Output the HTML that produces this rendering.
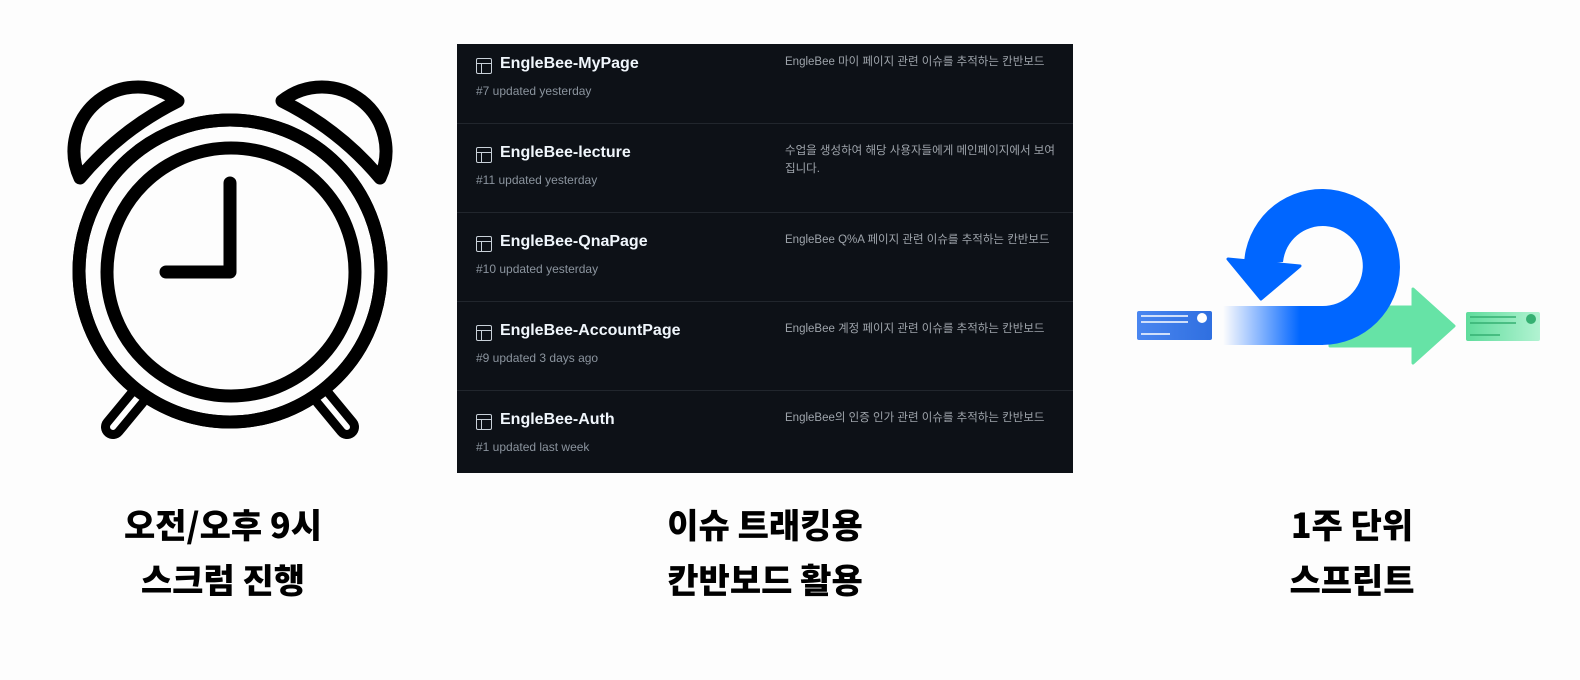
<!DOCTYPE html>
<html><head><meta charset="utf-8"><style>
body{margin:0;width:1580px;height:680px;background:#fdfdfd;position:relative;overflow:hidden;font-family:"Liberation Sans","Noto Sans CJK KR",sans-serif}
.panel{position:absolute;left:457px;top:44px;width:616px;height:429px;background:#0d1117;overflow:hidden}
.row{position:absolute;left:0;width:616px;height:89px;border-bottom:1px solid #21262d}
.ic{position:absolute;left:19px;top:24px;width:14px;height:14px;border:1.5px solid #c9d1d9;border-radius:2px}
.ic:before{content:"";position:absolute;left:0;right:0;top:4px;border-top:1.5px solid #c9d1d9}
.ic:after{content:"";position:absolute;left:4px;top:4px;bottom:0;border-left:1.5px solid #c9d1d9}
.t{position:absolute;left:43px;top:21px;color:#f0f6fc;font-weight:bold;font-size:16px}
.s{position:absolute;left:19px;top:50px;color:#8b949e;font-size:12px}
.d{position:absolute;left:328px;top:19px;color:#9ea4ab;font-size:11.5px;line-height:18px;width:290px}
.cap{position:absolute;text-align:center;font-weight:900;font-size:34px;line-height:55px;color:#000;font-family:"Noto Sans CJK KR","Liberation Sans",sans-serif}
</style></head><body>
<svg width="1580" height="680" style="position:absolute;left:0;top:0">
<g fill="none" stroke="#000" stroke-width="13" stroke-linecap="round" stroke-linejoin="round">
<circle cx="230" cy="271" r="151"/>
<circle cx="231" cy="272" r="124"/>
<path d="M230,183 L230,272 L166,272"/>
<path d="M80,178 A64,64 0 0 1 178,101 Q120,130 80,178 Z"/>
<path d="M380,178 A64,64 0 0 0 282,101 Q340,130 380,178 Z"/>
</g>
<g stroke-linecap="round">
<line x1="137" y1="398" x2="113" y2="427" stroke="#000" stroke-width="24"/>
<line x1="137" y1="398" x2="113" y2="427" stroke="#fff" stroke-width="6"/>
<line x1="323" y1="398" x2="347" y2="427" stroke="#000" stroke-width="24"/>
<line x1="323" y1="398" x2="347" y2="427" stroke="#fff" stroke-width="6"/>
</g>
<circle cx="230" cy="271" r="151" fill="none" stroke="#000" stroke-width="13"/>
<defs>
<linearGradient id="bg" x1="1223" x2="1300" y1="0" y2="0" gradientUnits="userSpaceOnUse"><stop offset="0" stop-color="#0a66ff" stop-opacity="0"/><stop offset="1" stop-color="#0066ff"/></linearGradient>
<linearGradient id="gc" x1="0" x2="1" y1="0" y2="0"><stop offset="0" stop-color="#5fdc9c"/><stop offset="1" stop-color="#b2f3d2"/></linearGradient>
<linearGradient id="bc" x1="0" x2="1"><stop offset="0" stop-color="#4a86f0"/><stop offset="1" stop-color="#2f6fe0"/></linearGradient>
</defs>
<path d="M1330,307 L1413,307 L1413,289 L1454,326 L1413,363 L1413,346 L1330,346 Z" fill="#66e3a6" stroke="#66e3a6" stroke-width="3" stroke-linejoin="round"/>
<rect x="1223" y="306" width="100" height="39" fill="url(#bg)"/>
<path d="M1322,306 A40,40 0 1 0 1283,262 L1244,265 A78,78 0 1 1 1322,345 Z" fill="#0066ff"/>
<path d="M1228,259 L1300,266 L1261,299 Z" fill="#0066ff" stroke="#0066ff" stroke-width="3" stroke-linejoin="round"/>
<rect x="1137" y="311" width="75" height="29" rx="2" fill="url(#bc)"/>
<circle cx="1202" cy="318" r="5" fill="#fff"/>
<g stroke="#fff" stroke-width="1.5"><line x1="1141" y1="316" x2="1188" y2="316"/><line x1="1141" y1="322" x2="1188" y2="322"/><line x1="1141" y1="334" x2="1170" y2="334"/></g>
<rect x="1466" y="312" width="74" height="29" rx="2" fill="url(#gc)"/>
<circle cx="1531" cy="319" r="5" fill="#35b072"/>
<g stroke="#35b072" stroke-width="1.5"><line x1="1470" y1="317" x2="1516" y2="317"/><line x1="1470" y1="323" x2="1516" y2="323"/><line x1="1470" y1="335" x2="1500" y2="335"/></g>
</svg>

<div class="panel">
<div class="row" style="top:-10px"><div class="ic"></div><div class="t">EngleBee-MyPage</div><div class="s">#7 updated yesterday</div><div class="d">EngleBee 마이 페이지 관련 이슈를 추적하는 칸반보드</div></div>
<div class="row" style="top:79px"><div class="ic"></div><div class="t">EngleBee-lecture</div><div class="s">#11 updated yesterday</div><div class="d">수업을 생성하여 해당 사용자들에게 메인페이지에서 보여<br>집니다.</div></div>
<div class="row" style="top:168px"><div class="ic"></div><div class="t">EngleBee-QnaPage</div><div class="s">#10 updated yesterday</div><div class="d">EngleBee Q%A 페이지 관련 이슈를 추적하는 칸반보드</div></div>
<div class="row" style="top:257px"><div class="ic"></div><div class="t">EngleBee-AccountPage</div><div class="s">#9 updated 3 days ago</div><div class="d">EngleBee 계정 페이지 관련 이슈를 추적하는 칸반보드</div></div>
<div class="row" style="top:346px;border:none"><div class="ic"></div><div class="t">EngleBee-Auth</div><div class="s">#1 updated last week</div><div class="d">EngleBee의 인증 인가 관련 이슈를 추적하는 칸반보드</div></div>
</div>

<div class="cap" style="left:73px;width:300px;top:496px">오전/오후 9시<br>스크럼 진행</div>
<div class="cap" style="left:615px;width:300px;top:496px">이슈 트래킹용<br>칸반보드 활용</div>
<div class="cap" style="left:1202px;width:300px;top:496px">1주 단위<br>스프린트</div>
</body></html>
